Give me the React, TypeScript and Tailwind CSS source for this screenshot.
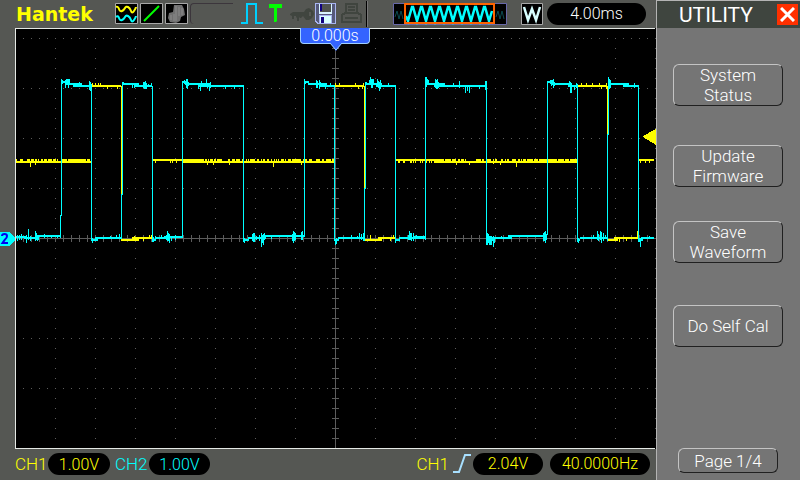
import { useState } from "react";
import { clsx } from "clsx";

type MenuItem = { lines: string[]; gap: string };

const menuItems: MenuItem[] = [
  { lines: ["System", "Status"], gap: "mt-9" },
  { lines: ["Update", "Firmware"], gap: "mt-[39px]" },
  { lines: ["Save", "Waveform"], gap: "mt-[34px]" },
  { lines: ["Do Self Cal"], gap: "mt-[42px]" },
];

// [x, y top, y bottom]
type Spike = [number, number, number];

const toPath = (list: Spike[]) =>
  list.map(([x, a, b]) => `M${x + 0.5} ${a}V${b}`).join("");

const yellowLevels =
  // middle level, lower band
  "M15 162h76M182 162h152M434 162h143" +
  // middle level, upper band
  "M15 160h2M20 160h3M27 160h3M31 160h3M35 160h2M38 160h1M41 160h2M44 160h3M48 160h4M53 160h3M57 160h1M61 160h6M68 160h5M73 160h13M87 160h3" +
  "M153 160h51M205 160h2M208 160h1M210 160h3M214 160h2M217 160h5M228 160h2M232 160h3M236 160h4M242 160h1M246 160h1M248 160h1M250 160h5M257 160h2M261 160h1M263 160h2M267 160h2M271 160h1M274 160h1M276 160h1M278 160h1M281 160h3M285 160h1M288 160h3M292 160h9M303 160h4M309 160h3M316 160h4M322 160h2M326 160h5M332 160h2" +
  "M396 160h48M445 160h6M452 160h4M458 160h2M461 160h3M465 160h1M476 160h5M482 160h2M486 160h5M493 160h1M495 160h2M501 160h2M505 160h1M507 160h2M512 160h4M518 160h2M521 160h1M523 160h3M527 160h6M534 160h4M539 160h8M548 160h9M558 160h6M565 160h4M570 160h7M639 160h15" +
  // high and low levels
  "M91 86h30M334 86h30M577 86h30" +
  "M121 240h18M132 238h20M365 240h17M378 238h17M608 240h10M614 238h24";

const yellowSpikes: Spike[] = [
  [30, 162, 167], [35, 162, 165], [155, 160, 163], [170, 160, 163], [172, 160, 163], [176, 160, 163],
  [207, 162, 165], [213, 162, 165], [229, 162, 165], [273, 162, 167], [301, 162, 165],
  [398, 160, 163], [399, 160, 163], [403, 160, 163], [404, 160, 163], [410, 160, 163], [411, 160, 163],
  [413, 160, 163], [415, 160, 163], [420, 160, 163], [422, 160, 163], [425, 160, 163], [426, 160, 163],
  [429, 160, 163], [431, 160, 163], [456, 162, 165], [469, 162, 165], [493, 161, 164], [500, 162, 165], [516, 162, 167],
  [640, 160, 163], [645, 160, 163], [649, 160, 163],
  [92, 83, 86], [95, 83, 86], [98, 83, 86], [100, 83, 86], [107, 86, 89], [117, 86, 89],
  [335, 83, 86], [339, 83, 86], [355, 83, 86], [358, 86, 89], [362, 86, 89], [363, 83, 86],
  [581, 83, 86], [586, 83, 86], [592, 83, 86], [599, 83, 86], [601, 86, 89], [606, 83, 89],
  [134, 236, 239], [143, 238, 241], [149, 235, 238], [151, 235, 238], [370, 235, 239], [393, 235, 238], [390, 238, 241],
  [619, 238, 242], [626, 238, 241], [637, 231, 239],
  // partial falling edges
  [121, 86, 195], [364, 86, 189], [607, 86, 135],
];

const cyanLevels =
  "M61 82h8M66 84h16M73 86h19M122 84h17M134 86h18" +
  "M182 82h6M185 84h26M199 86h45M304 82h5M308 84h19M320 86h15" +
  "M365 84h17M376 86h20M426 82h3M427 84h18M436 86h50M547 82h6M551 84h21M568 86h10M608 84h21M623 86h15" +
  "M15 237h12M24 238h13M35 236h26M92 240h6M95 238h26M153 240h3M155 238h12M164 237h18" +
  "M243 240h6M248 238h18M262 236h42M335 240h4M338 238h26M396 240h4M399 238h26M413 237h12" +
  "M486 240h8M492 238h20M508 236h39M578 240h2M580 238h27M639 240h4M642 238h12";

const cyanSpikes: Spike[] = [
  // edges
  [60, 215, 238], [61, 79, 216], [91, 84, 241], [122, 82, 195], [121, 194, 239], [152, 86, 242],
  [182, 81, 238], [243, 85, 242], [304, 79, 237], [334, 86, 241], [365, 82, 189], [364, 188, 241],
  [395, 85, 243], [425, 77, 240], [486, 81, 245], [547, 81, 235], [577, 84, 242], [608, 77, 135],
  [607, 134, 241], [638, 85, 242],
  // high level
  [62, 80, 84], [65, 80, 88], [66, 79, 84], [67, 79, 84], [68, 79, 88], [69, 79, 84], [74, 83, 87], [75, 83, 87],
  [79, 82, 86], [89, 81, 90], [90, 82, 91], [123, 82, 85], [132, 84, 88], [134, 84, 88], [138, 84, 87],
  [143, 82, 88], [144, 82, 89], [145, 81, 89], [146, 83, 89], [148, 84, 87], [151, 83, 87],
  [184, 80, 84], [186, 79, 88], [187, 79, 89], [188, 82, 86], [198, 84, 89], [200, 84, 91], [201, 81, 87],
  [206, 79, 86], [207, 83, 88], [209, 84, 91], [210, 82, 88], [225, 86, 89], [234, 86, 89],
  [305, 81, 84], [316, 80, 88], [317, 81, 88], [319, 80, 89], [320, 82, 86], [325, 84, 89], [330, 83, 87],
  [366, 82, 85], [369, 80, 84], [370, 77, 84], [371, 79, 88], [372, 79, 88], [373, 79, 84], [377, 79, 86],
  [378, 81, 88], [379, 82, 91], [380, 80, 89], [388, 83, 87], [426, 77, 87], [427, 79, 84], [428, 80, 84],
  [434, 83, 87], [435, 79, 88], [436, 80, 89], [437, 79, 89], [438, 82, 88], [453, 83, 86], [459, 81, 88],
  [465, 86, 93], [467, 86, 91], [469, 86, 93], [479, 86, 89], [485, 81, 90],
  [550, 80, 84], [551, 80, 86], [552, 80, 84], [553, 79, 88], [554, 82, 86], [569, 81, 86], [570, 82, 93],
  [571, 84, 93], [574, 85, 90], [576, 83, 88], [609, 79, 89], [610, 80, 88], [625, 83, 86], [634, 83, 88],
  // low level
  [17, 235, 241], [19, 235, 240], [21, 234, 240], [26, 235, 243], [28, 229, 240], [30, 236, 241], [35, 231, 241],
  [36, 233, 240], [37, 235, 241], [38, 236, 240], [44, 234, 238], [51, 235, 238], [57, 235, 238],
  [92, 238, 243], [110, 236, 239], [116, 235, 239], [119, 234, 239], [153, 237, 242], [155, 236, 241],
  [161, 235, 239], [166, 235, 240], [167, 231, 241], [168, 233, 241], [169, 234, 243], [171, 236, 241], [175, 235, 240],
  [244, 238, 243], [252, 234, 241], [253, 233, 242], [254, 233, 242], [256, 236, 240], [259, 235, 241], [261, 233, 247],
  [262, 235, 243], [263, 234, 245], [264, 233, 240], [271, 235, 239], [292, 234, 241], [293, 231, 243],
  [294, 232, 241], [295, 233, 240], [301, 232, 240], [302, 231, 240], [335, 239, 245], [336, 238, 244],
  [351, 235, 239], [357, 236, 239], [359, 233, 239], [361, 234, 240], [363, 233, 241],
  [408, 235, 240], [409, 231, 240], [410, 233, 240], [411, 233, 241], [413, 233, 241], [416, 235, 239],
  [487, 233, 245], [488, 234, 243], [489, 236, 245], [490, 236, 245], [491, 236, 245], [493, 236, 247], [494, 237, 243],
  [501, 236, 239], [543, 233, 241], [544, 232, 241], [545, 231, 243], [546, 234, 240], [578, 238, 243],
  [593, 235, 239], [597, 231, 240], [598, 234, 241], [600, 231, 240], [601, 232, 243], [603, 233, 241], [605, 235, 239],
  [639, 238, 242], [640, 238, 247], [641, 237, 241], [649, 236, 239],
];

const columns = Array.from({ length: 16 }, (_, i) => 55 + i * 40);
const rows = Array.from({ length: 8 }, (_, i) => 38 + i * 50);

const gridDots =
  columns
    .map((x) => Array.from({ length: 41 }, (_, i) => `M${x} ${38.5 + i * 10}h1`).join(""))
    .join("") +
  rows
    .map((y) => Array.from({ length: 79 }, (_, i) => `M${23 + i * 8} ${y + 0.5}h1`).join(""))
    .join("");

const axisTicks =
  Array.from({ length: 41 }, (_, i) => `M332 ${38.5 + i * 10}h7`).join("") +
  Array.from({ length: 79 }, (_, i) => `M${23.5 + i * 8} 235v7`).join("");

const Scope = () => (
  <svg
    viewBox="0 28 656 421"
    preserveAspectRatio="none"
    shapeRendering="crispEdges"
    fill="none"
    className="block h-full w-full"
  >
    <path d="M15 28h641v421H15z" fill="#000" />
    <path d={gridDots} stroke="#5c5c5c" />
    <path d={"M335.5 28V448M15 238.5H655" + axisTicks} stroke="#5c5c5c" />
    <path d={yellowLevels} stroke="#ff0" strokeWidth="2" />
    <path d={toPath(yellowSpikes)} stroke="#ff0" />
    <path d={cyanLevels} stroke="#0ff" strokeWidth="2" />
    <path d={toPath(cyanSpikes)} stroke="#0ff" />
    <path d="M15.5 448V28.5H655M15 448.5H655" stroke="#e4e8e4" />
    <path d="M656 129V145L643 137v-1z" fill="#ff0" />
    <path d="M0 232h9l6 6v2l-6 6H0z" fill="#0ff" />
    <path d="M2 236q0-2 2.500-2t2.500 2q0 2-2 3.500L2.500 243H8" stroke="#0000f0" strokeWidth="2" shapeRendering="auto" />
  </svg>
);

const WavesIcon = () => (
  <svg width="23" height="21" fill="none">
    <path d="M.5.5h22v20H.5z" fill="#000" stroke="#a8a8a8" />
    <path d="M1 4q2-1 3 2t3 2 3-3 3-1 3 4 3 0 2-4" stroke="#ff0" strokeWidth="2" />
    <path d="M1 14q2-2 3 1t3 2 3-3 3-1 3 4 3 0 2-4" stroke="#0ff" strokeWidth="2" />
  </svg>
);

const LineIcon = () => (
  <svg width="23" height="21" fill="none">
    <path d="M.5.5h22v20H.5z" fill="#000" stroke="#a8a8a8" />
    <path d="M4 18L19 3" stroke="#0f0" strokeWidth="2" />
  </svg>
);

const PersistIcon = () => (
  <svg width="23" height="21" fill="none">
    <path d="M.5.5h22v20H.5z" fill="#000" stroke="#a8a8a8" />
    <path d="M9 2h8l2 4 1 6-4 2-1 4-4 2-6-1-2-4 1-5 4-1z" fill="#707070" />
    <path d="M11 3v15M14 4v9M17 5v7M6 12v5M9 11v7" stroke="#8c8c8c" />
  </svg>
);

const KeyIcon = () => (
  <svg width="24" height="14">
    <path
      fillRule="evenodd"
      d="M0 6l3-2h11l2-3 3-1 4 3 1 3-2 4-3 2h-3l-3-4-2 2h-1l-1-1v4h-2v-4l-2 2H6V8H4v3H2V8L0 7zM19 4h2v4h-2z"
      fill="#40453f"
    />
  </svg>
);

const SaveIcon = () => (
  <svg width="21" height="21" shapeRendering="crispEdges">
    <path d="M0 0h21v21H2l-2-2z" fill="#a8b4f0" />
    <path d="M1 1h3v9h13V1h3v19h-3v-8H4v8H3l-2-2z" fill="#55597a" />
    <path d="M5 1h11v8H5z" fill="#50534f" />
    <path d="M4 9h13v2H4zM4 1h1v8H4zM16 1h1v8h-1z" fill="#d8f4ff" />
    <path d="M5 1h2v7H5z" fill="#100080" />
    <path d="M5 13h11v7H5z" fill="#d8ffff" />
    <path d="M6 14h3v6H6z" fill="#100080" />
  </svg>
);

const PrintIcon = () => (
  <svg width="21" height="21" fill="none" stroke="#40453f" strokeWidth="2" shapeRendering="crispEdges">
    <path d="M5 10V1h11v9M7 4h7M7 7h7M1 19v-7l3-2h13l3 2v7zM4 15h13" />
  </svg>
);

const PreviewIcon = () => {
  const cycles = Array.from({ length: 9 }, () => "l4-14h1l4 14").join("");
  return (
    <svg width="114" height="22" fill="none">
      <path d="M.5.5h113v21H.5z" fill="#000" stroke="#6868a8" />
      <path d="M2 14l2-6 2 8 2-8 2 8M103 14l2-6 2 8 2-8 2 8" stroke="#0a4a50" />
      <path d={`M13 13l2 5${cycles}l3-10`} stroke="#0ff" strokeWidth="2.5" />
      <path d="M12 1h89v19H12z" stroke="#ff6400" strokeWidth="2" />
    </svg>
  );
};

const Pill = ({ text, className }: { text: string; className: string }) => (
  <span
    className={clsx(
      "flex h-[22px] items-center justify-center rounded-full bg-black text-base leading-5 font-light",
      className
    )}
  >
    {text}
  </span>
);

const TopBar = () => (
  <header className="flex h-7 shrink-0 items-start pt-[3px] pl-4">
    <h1 className="w-[99px] font-['DejaVu_Sans'] text-[19px] leading-[22px] font-bold text-[#ff0]">
      Hantek
    </h1>
    <div className="flex gap-[2px]">
      <WavesIcon />
      <LineIcon />
      <PersistIcon />
    </div>
    <div className="ml-[2px] h-[21px] w-[43px] rounded-l-sm border-t border-l border-[#3c363c]" />
    <svg width="22" height="22" fill="none" className="ml-2">
      <path d="M0 20h6V1h9v19h7" stroke="#00d0ff" strokeWidth="2" />
    </svg>
    <svg width="14" height="20" className="ml-[5px]">
      <path d="M1 1h13v4H9v13l-1 1H6V5H1z" fill="#0f0" />
    </svg>
    <div className="mt-[5px] ml-2">
      <KeyIcon />
    </div>
    <div className="ml-[1px]">
      <SaveIcon />
    </div>
    <div className="ml-[5px]">
      <PrintIcon />
    </div>
    <div className="-mt-[2px] ml-1 h-[26px] w-[2px] border-r border-l border-r-[#777] border-l-black" />
    <div className="ml-[25px] flex-1">
      <PreviewIcon />
    </div>
    <svg width="22" height="22" fill="none" className="shrink-0">
      <path d="M.5.5h21v21H.5z" fill="#000" stroke="#a8a8a8" />
      <path d="M3 4l4 13 4-11 4 11 4-13" stroke="#d8ffff" strokeWidth="2.5" />
    </svg>
    <Pill text="4.00ms" className="mr-[10px] ml-1 w-[99px] text-white" />
  </header>
);

const BottomBar = () => (
  <footer className="flex h-[31px] shrink-0 items-center pb-[2px] pl-[15px] text-[17px] leading-5 font-light">
    <span className="w-[33px] text-[#ff0]">CH1</span>
    <Pill text="1.00V" className="w-[62px] pt-[2px] text-[#ff0]" />
    <span className="ml-[5px] w-[34px] text-[#0ff]">CH2</span>
    <Pill text="1.00V" className="w-[61px] pt-[2px] text-[#0ff]" />
    <span className="ml-auto text-[#ff0]">CH1</span>
    <svg width="18" height="19" fill="none" className="mr-[2px] ml-1">
      <path d="M0 18h6L12 1h6" stroke="#a8e0ff" strokeWidth="2" />
    </svg>
    <Pill text="2.04V" className="w-[70px] text-[#ff0]" />
    <Pill text="40.0000Hz" className="mr-[6px] ml-[7px] w-[100px] text-[#ff0]" />
  </footer>
);

const buttonStyle =
  "rounded-md border border-t-[#c4c4c4] border-l-[#c4c4c4] border-r-[#202020] border-b-[#202020] text-[17px] leading-5 font-light text-white";

const UtilityMenu = ({ onClose }: { onClose: () => void }) => {
  const [page, setPage] = useState(1);

  return (
    <aside className="flex w-36 shrink-0 flex-col border-t border-l border-[#b4b4b4] bg-[#757575]">
      <div className="flex h-[27px] items-center justify-between bg-[#3f453f] pr-[2px] pl-[22px]">
        <h2 className="text-[21px] leading-6 text-white">UTILITY</h2>
        <button
          type="button"
          aria-label="Close"
          onClick={onClose}
          className="flex size-[21px] items-center justify-center bg-[#ff3000]"
        >
          <svg width="15" height="15">
            <path d="M1 1l13 13M14 1L1 14" stroke="#fff" strokeWidth="3" />
          </svg>
        </button>
      </div>
      <div className="flex flex-1 flex-col pr-[17px] pb-[7px] pl-4">
        {menuItems.map((item) => (
          <button key={item.lines[0]} type="button" className={clsx("h-[42px]", buttonStyle, item.gap)}>
            {item.lines.map((line) => (
              <span key={line} className="block">
                {line}
              </span>
            ))}
          </button>
        ))}
        <button
          type="button"
          onClick={() => setPage((page % 4) + 1)}
          className={clsx("mx-[5px] mt-auto h-[25px]", buttonStyle)}
        >
          {`Page ${page}/4`}
        </button>
      </div>
    </aside>
  );
};

export default function App() {
  const [menuOpen, setMenuOpen] = useState(true);

  return (
    <div className="flex min-h-screen bg-[#555753] font-[Roboto,sans-serif]">
      <div className="flex min-w-0 flex-1 flex-col">
        <TopBar />
        <main className="relative min-h-0 flex-1">
          <Scope />
          <div className="absolute top-0 left-[300px] flex h-4 w-[70px] items-center justify-center rounded-b-sm border border-t-0 border-[#a0d0ff] bg-[#3464ff] text-base leading-4 font-light text-white">
            0.000s
            <svg width="12" height="8" className="absolute top-[15px] left-[29px]">
              <path d="M0 0h12L6 8z" fill="#3464ff" />
              <path d="M0 0l6 7 6-7" fill="none" stroke="#a0d0ff" />
            </svg>
          </div>
        </main>
        <BottomBar />
      </div>
      {menuOpen && <UtilityMenu onClose={() => setMenuOpen(false)} />}
    </div>
  );
}
